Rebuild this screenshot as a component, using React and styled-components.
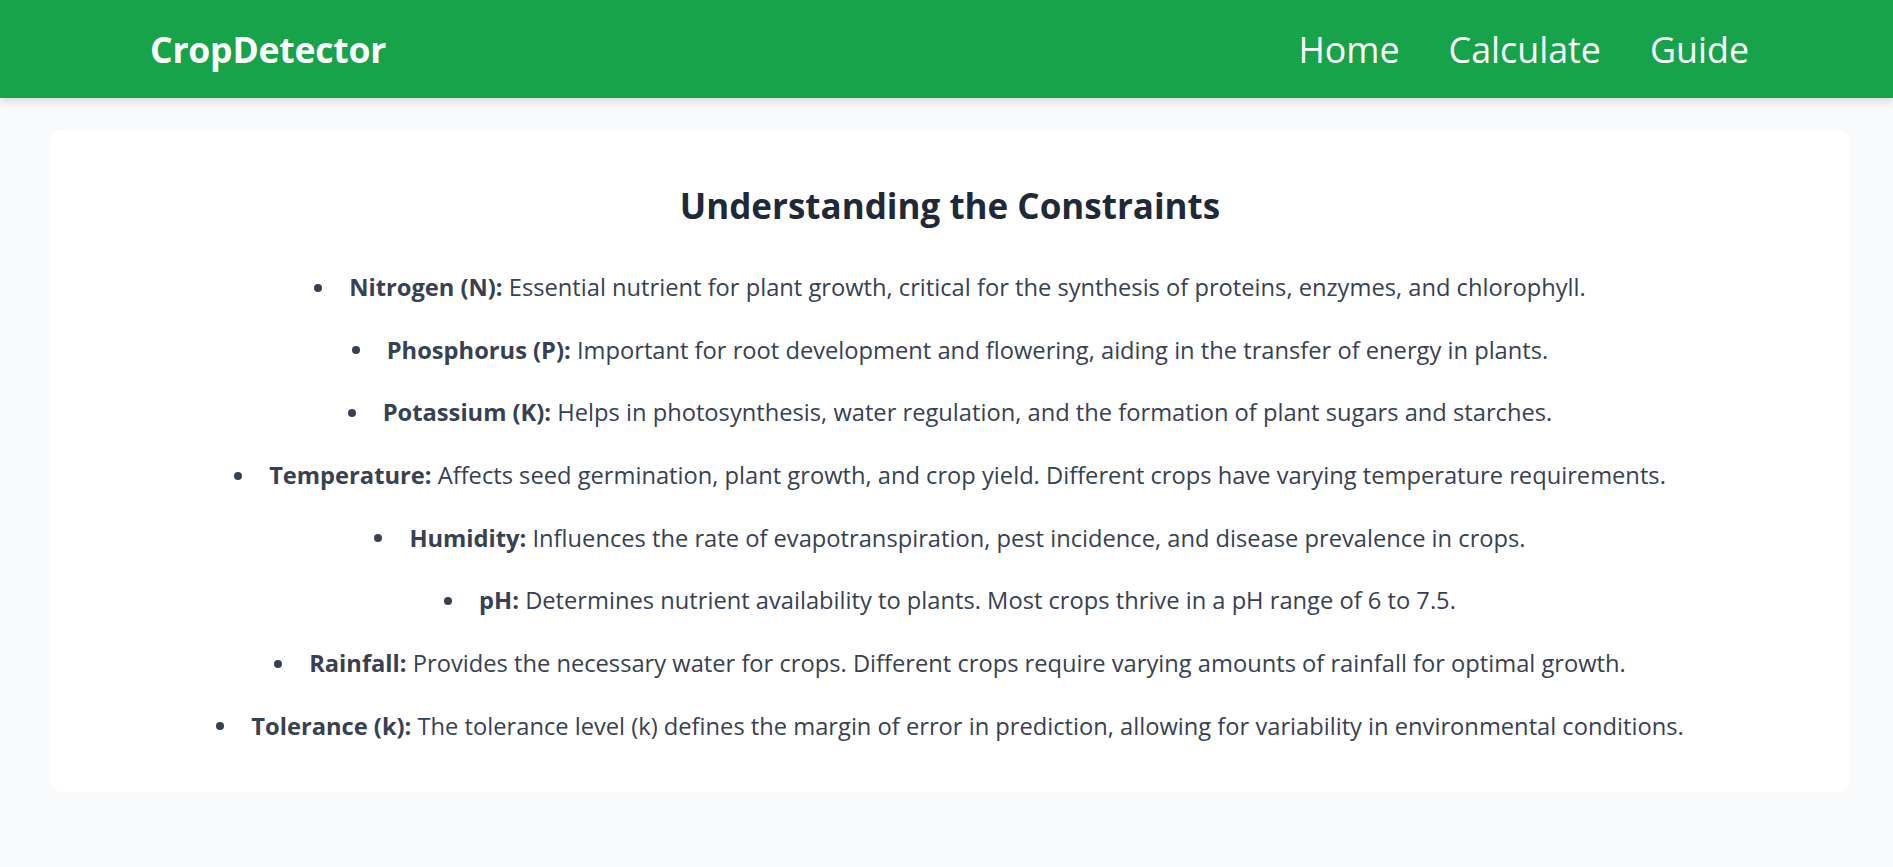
import React from "react";
import styled, { createGlobalStyle } from "styled-components";

const Global = createGlobalStyle`
  * { box-sizing: border-box; }
  html, body { margin: 0; padding: 0; }
  body {
    background: #f9fafb;
    font-family: "Open Sans", "Noto Sans", sans-serif;
    color: #374151;
  }
`;

const Header = styled.header`
  height: 98px;
  background: #16a34a;
  display: flex;
  align-items: center;
  justify-content: space-between;
  padding: 0 144px 0 150px;
  box-shadow: 0 4px 8px rgba(0, 0, 0, 0.12);
`;

const Brand = styled.div`
  color: #ffffff;
  font-weight: 700;
  font-size: 35.5px;
  line-height: 44px;
  letter-spacing: -0.2px;
`;

const Nav = styled.nav`
  display: flex;
  gap: 49px;
`;

const NavLink = styled.a`
  color: #ffffff;
  font-size: 35.8px;
  line-height: 44px;
  text-decoration: none;
`;

const Main = styled.main`
  padding: 32px 43px 0 50px;
`;

const Card = styled.section`
  background: #ffffff;
  border-radius: 12px;
  padding: 54px 0 49px;
  display: flex;
  flex-direction: column;
  align-items: center;
`;

const Title = styled.h2`
  margin: 0 0 42px;
  font-size: 35px;
  line-height: 44px;
  font-weight: 700;
  color: #1f2937;
`;

const List = styled.ul`
  margin: 0;
  padding: 0;
  list-style: none;
  display: flex;
  flex-direction: column;
  align-items: center;
  gap: 28.7px;
`;

const Item = styled.li`
  font-size: 23.7px;
  line-height: 34px;
  color: #374151;
  white-space: nowrap;
`;

const Dot = styled.span`
  display: inline-block;
  width: 8px;
  height: 8px;
  border-radius: 50%;
  background: #374151;
  vertical-align: middle;
  margin: 0 27px 4px 0;
`;

const Label = styled.strong`
  font-weight: 700;
`;

const items = [
  ["Nitrogen (N):", "Essential nutrient for plant growth, critical for the synthesis of proteins, enzymes, and chlorophyll."],
  ["Phosphorus (P):", "Important for root development and flowering, aiding in the transfer of energy in plants."],
  ["Potassium (K):", "Helps in photosynthesis, water regulation, and the formation of plant sugars and starches."],
  ["Temperature:", "Affects seed germination, plant growth, and crop yield. Different crops have varying temperature requirements."],
  ["Humidity:", "Influences the rate of evapotranspiration, pest incidence, and disease prevalence in crops."],
  ["pH:", "Determines nutrient availability to plants. Most crops thrive in a pH range of 6 to 7.5."],
  ["Rainfall:", "Provides the necessary water for crops. Different crops require varying amounts of rainfall for optimal growth."],
  ["Tolerance (k):", "The tolerance level (k) defines the margin of error in prediction, allowing for variability in environmental conditions."],
];

export default function App() {
  return (
    <>
      <Global />
      <Header>
        <Brand>CropDetector</Brand>
        <Nav>
          <NavLink href="#">Home</NavLink>
          <NavLink href="#">Calculate</NavLink>
          <NavLink href="#">Guide</NavLink>
        </Nav>
      </Header>
      <Main>
        <Card>
          <Title>Understanding the Constraints</Title>
          <List>
            {items.map(([label, text]) => (
              <Item key={label}>
                <Dot />
                <Label>{label}</Label> {text}
              </Item>
            ))}
          </List>
        </Card>
      </Main>
    </>
  );
}
